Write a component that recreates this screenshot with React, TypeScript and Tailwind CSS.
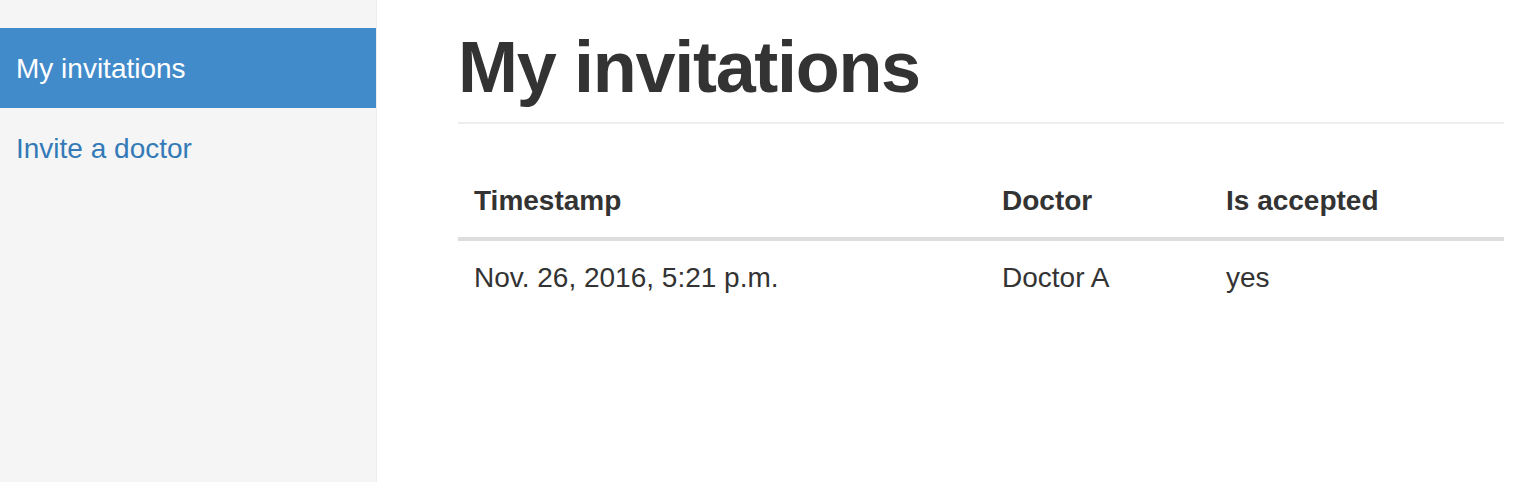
export default function App() {
  return (
    <div
      className="flex h-[482px] w-full bg-white text-[#333]"
      style={{ fontFamily: '"Liberation Sans", Arial, sans-serif' }}
    >
      {/* Sidebar */}
      <div className="w-[377px] shrink-0 border-r border-[#eee] bg-[#f5f5f5] pt-[28px]">
        <ul>
          <li>
            <a className="block bg-[#428bca] px-[16px] pt-[21px] pb-[19px] text-[28px] leading-[40px] text-white">
              My invitations
            </a>
          </li>
          <li>
            <a className="block px-[16px] pt-[21px] pb-[19px] text-[28px] leading-[40px] text-[#337ab7]">
              Invite a doctor
            </a>
          </li>
        </ul>
      </div>

      {/* Main */}
      <div className="flex-1 pl-[81px] pr-[26px]">
        <h1 className="mt-[28px] border-b-2 border-[#eee] pb-[15px] text-[72px] font-bold leading-[79px] tracking-[-1.3px]">
          My invitations
        </h1>

        <table className="mt-[41px] w-full border-collapse text-left text-[28px] leading-[40px]">
          <thead>
            <tr className="border-b-4 border-[#ddd]">
              <th className="w-[528px] p-[16px] font-bold">Timestamp</th>
              <th className="w-[224px] p-[16px] font-bold">Doctor</th>
              <th className="p-[16px] font-bold">Is accepted</th>
            </tr>
          </thead>
          <tbody>
            <tr>
              <td className="px-[16px] pt-[17px] pb-[15px]">Nov. 26, 2016, 5:21 p.m.</td>
              <td className="px-[16px] pt-[17px] pb-[15px]">Doctor A</td>
              <td className="px-[16px] pt-[17px] pb-[15px]">yes</td>
            </tr>
          </tbody>
        </table>
      </div>
    </div>
  )
}
